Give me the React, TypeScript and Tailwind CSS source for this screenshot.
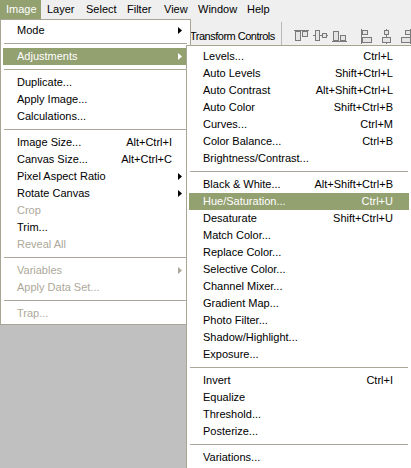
import React from "react";

type Entry =
  | { label: string; shortcut?: string; sub?: boolean; disabled?: boolean; active?: boolean }
  | "sep";

const imageMenu: Entry[] = [
  { label: "Mode", sub: true },
  "sep",
  { label: "Adjustments", sub: true, active: true },
  "sep",
  { label: "Duplicate..." },
  { label: "Apply Image..." },
  { label: "Calculations..." },
  "sep",
  { label: "Image Size...", shortcut: "Alt+Ctrl+I" },
  { label: "Canvas Size...", shortcut: "Alt+Ctrl+C" },
  { label: "Pixel Aspect Ratio", sub: true },
  { label: "Rotate Canvas", sub: true },
  { label: "Crop", disabled: true },
  { label: "Trim..." },
  { label: "Reveal All", disabled: true },
  "sep",
  { label: "Variables", sub: true, disabled: true },
  { label: "Apply Data Set...", disabled: true },
  "sep",
  { label: "Trap...", disabled: true },
];

const adjustMenu: Entry[] = [
  { label: "Levels...", shortcut: "Ctrl+L" },
  { label: "Auto Levels", shortcut: "Shift+Ctrl+L" },
  { label: "Auto Contrast", shortcut: "Alt+Shift+Ctrl+L" },
  { label: "Auto Color", shortcut: "Shift+Ctrl+B" },
  { label: "Curves...", shortcut: "Ctrl+M" },
  { label: "Color Balance...", shortcut: "Ctrl+B" },
  { label: "Brightness/Contrast..." },
  "sep",
  { label: "Black & White...", shortcut: "Alt+Shift+Ctrl+B" },
  { label: "Hue/Saturation...", shortcut: "Ctrl+U", active: true },
  { label: "Desaturate", shortcut: "Shift+Ctrl+U" },
  { label: "Match Color..." },
  { label: "Replace Color..." },
  { label: "Selective Color..." },
  { label: "Channel Mixer..." },
  { label: "Gradient Map..." },
  { label: "Photo Filter..." },
  { label: "Shadow/Highlight..." },
  { label: "Exposure..." },
  "sep",
  { label: "Invert", shortcut: "Ctrl+I" },
  { label: "Equalize" },
  { label: "Threshold..." },
  { label: "Posterize..." },
  "sep",
  { label: "Variations..." },
];

const menuBar = [
  { label: "Image", w: "w-[41px]", active: true },
  { label: "Layer", w: "w-[39px]" },
  { label: "Select", w: "w-[41px]" },
  { label: "Filter", w: "w-[37px]" },
  { label: "View", w: "w-[34px]" },
  { label: "Window", w: "w-[49px]" },
  { label: "Help", w: "w-[40px]" },
];

function Arrow({ color }: { color: string }) {
  return (
    <svg width="4" height="7" viewBox="0 0 4 7">
      <polygon points="0,0 4,3.5 0,7" fill={color} />
    </svg>
  );
}

function Menu({ items }: { items: Entry[] }) {
  return (
    <div className="flex flex-col">
      {items.map((it, i) => {
        if (it === "sep") {
          return (
            <div key={i} className="flex h-[9px] items-center px-[1px]">
              <div className="h-px w-full bg-[#aca899]" />
            </div>
          );
        }
        const text = it.active ? "text-white" : it.disabled ? "text-[#aca899]" : "text-black";
        const arrow = it.active ? "#ffffff" : it.disabled ? "#aca899" : "#000000";
        return (
          <div
            key={i}
            className={`flex h-[17px] items-center pl-[14px] pr-[6px] leading-[17px] whitespace-nowrap ${text} ${
              it.active ? "bg-[#93a070]" : ""
            }`}
          >
            <span>{it.label}</span>
            <span className="ml-auto">{it.shortcut}</span>
            <span className="flex w-[10px] justify-end">{it.sub && <Arrow color={arrow} />}</span>
          </div>
        );
      })}
    </div>
  );
}

function AlignIcons() {
  const st = "#7a7a7a";
  const fl = "#e4e4e4";
  return (
    <div className="flex items-center">
      <svg width="15" height="12" className="ml-[12px]">
        <line x1="0" y1="0.5" x2="15" y2="0.5" stroke={st} />
        <rect x="1.5" y="1.5" width="5" height="9" fill={fl} stroke={st} />
        <rect x="8.5" y="1.5" width="5" height="5" fill={fl} stroke={st} />
      </svg>
      <svg width="15" height="12" className="ml-[4px]">
        <line x1="0" y1="5.5" x2="15" y2="5.5" stroke={st} />
        <rect x="2.5" y="0.5" width="4" height="10" fill={fl} stroke={st} />
        <rect x="9.5" y="3.5" width="4" height="4" fill={fl} stroke={st} />
      </svg>
      <svg width="15" height="12" className="ml-[4px]">
        <line x1="0" y1="11.5" x2="15" y2="11.5" stroke={st} />
        <rect x="1.5" y="1.5" width="5" height="9" fill={fl} stroke={st} />
        <rect x="8.5" y="5.5" width="5" height="5" fill={fl} stroke={st} />
      </svg>
      <svg width="11" height="15" className="ml-[14px]">
        <line x1="0.5" y1="0" x2="0.5" y2="15" stroke={st} />
        <rect x="1.5" y="1.5" width="5" height="4" fill={fl} stroke={st} />
        <rect x="1.5" y="8.5" width="9" height="5" fill={fl} stroke={st} />
      </svg>
      <svg width="11" height="15" className="ml-[9px]">
        <line x1="5.5" y1="0" x2="5.5" y2="15" stroke={st} />
        <rect x="3.5" y="1.5" width="4" height="4" fill={fl} stroke={st} />
        <rect x="1.5" y="8.5" width="8" height="5" fill={fl} stroke={st} />
      </svg>
      <svg width="11" height="15" className="ml-[8px]">
        <line x1="10.5" y1="0" x2="10.5" y2="15" stroke={st} />
        <rect x="5.5" y="1.5" width="5" height="4" fill={fl} stroke={st} />
        <rect x="1.5" y="8.5" width="9" height="5" fill={fl} stroke={st} />
      </svg>
    </div>
  );
}

export default function App() {
  return (
    <div className="relative h-[468px] w-[411px] overflow-hidden bg-[#c0c0c0] font-['Liberation_Sans',Arial,sans-serif] text-[11px]">
      <div className="flex h-[19px] bg-[#efefef]">
        {menuBar.map((m) => (
          <div
            key={m.label}
            className={`${m.w} pl-[6px] leading-[19px] ${m.active ? "bg-[#93a070] text-white" : "text-black"}`}
          >
            {m.label}
          </div>
        ))}
      </div>

      <div className="flex h-[34px] items-center bg-[#efefef]">
        <div className="w-[286px] pl-[190px] whitespace-nowrap tracking-[-0.5px] text-black">
          Transform Controls
        </div>
        <div className="mt-[3px] h-[24px] w-px self-start bg-[#b8b8b8]" />
        <AlignIcons />
      </div>

      <div className="absolute left-0 top-[19px] w-[191px] border border-[#a9a595] bg-white p-[2px]">
        <Menu items={imageMenu} />
      </div>

      <div className="absolute left-[186px] top-[45px] w-[226px] border border-[#a9a595] bg-white p-[2px]">
        <Menu items={adjustMenu} />
      </div>
    </div>
  );
}
